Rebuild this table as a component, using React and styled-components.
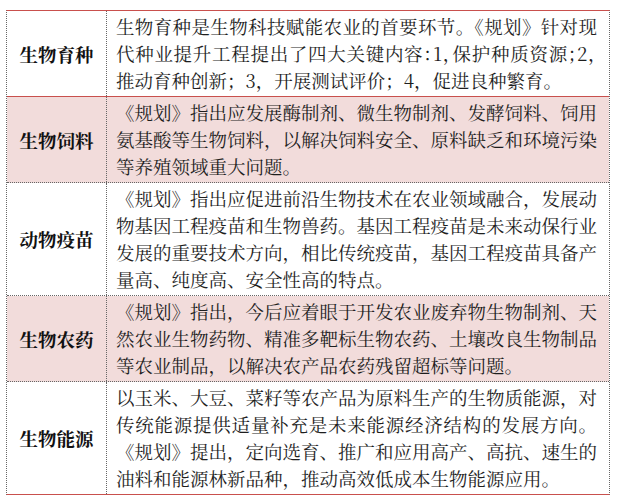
import React from "react";
import styled, { createGlobalStyle } from "styled-components";

const Global = createGlobalStyle`
  html, body { margin: 0; padding: 0; background: #ffffff; }
  body {
    padding: 10px 0 0 6px;
    font-family: "Noto Serif CJK SC", "Noto Sans CJK SC", "Liberation Serif", serif;
  }
`;

const Table = styled.div`
  width: 604px;
  box-sizing: border-box;
  border-top: 1px solid #c9504d;
  border-bottom: 1px solid #c9504d;
  border-left: 1px dotted #666;
  border-right: 1px dotted #666;
`;

const Row = styled.div`
  display: grid;
  grid-template-columns: 100px 1fr;
  background: ${(p) => (p.$alt ? "#f2dcdb" : "#ffffff")};
  border-bottom: ${(p) => (p.$last ? "none" : `1px ${p.$red ? "solid #c9504d" : "dotted #666"}`)};
`;

const Label = styled.div`
  display: flex;
  align-items: center;
  justify-content: center;
  font-weight: 700;
  font-size: 18.5px;
  color: #111;
  border-right: 1px dotted #666;
`;

const Content = styled.div`
  padding: 2px 12px 2px 9px;
  font-size: 18.5px;
  line-height: 27px;
  color: #1e1e1e;
  min-width: 0;
`;

const Line = styled.div`
  white-space: nowrap;
  text-align: ${(p) => (p.$fill ? "justify" : "left")};
  text-align-last: ${(p) => (p.$fill ? "justify" : "left")};
  text-justify: inter-character;
  ${(p) => (p.$compact ? `font-feature-settings: "halt"; letter-spacing: -0.2px;` : "")}
`;

const rows = [
  {
    label: "生物育种",
    lines: [
      "生物育种是生物科技赋能农业的首要环节。《规划》针对现",
      "代种业提升工程提出了四大关键内容：1，保护种质资源；2，",
      "推动育种创新；3，开展测试评价；4，促进良种繁育。",
    ],
    compact: [1],
    red: true,
  },
  {
    label: "生物饲料",
    alt: true,
    lines: [
      "《规划》指出应发展酶制剂、微生物制剂、发酵饲料、饲用",
      "氨基酸等生物饲料，以解决饲料安全、原料缺乏和环境污染",
      "等养殖领域重大问题。",
    ],
  },
  {
    label: "动物疫苗",
    lines: [
      "《规划》指出应促进前沿生物技术在农业领域融合，发展动",
      "物基因工程疫苗和生物兽药。基因工程疫苗是未来动保行业",
      "发展的重要技术方向，相比传统疫苗，基因工程疫苗具备产",
      "量高、纯度高、安全性高的特点。",
    ],
  },
  {
    label: "生物农药",
    alt: true,
    lines: [
      "《规划》指出，今后应着眼于开发农业废弃物生物制剂、天",
      "然农业生物药物、精准多靶标生物农药、土壤改良生物制品",
      "等农业制品，以解决农产品农药残留超标等问题。",
    ],
  },
  {
    label: "生物能源",
    lines: [
      "以玉米、大豆、菜籽等农产品为原料生产的生物质能源，对",
      "传统能源提供适量补充是未来能源经济结构的发展方向。",
      "《规划》提出，定向选育、推广和应用高产、高抗、速生的",
      "油料和能源林新品种，推动高效低成本生物能源应用。",
    ],
  },
];

export default function App() {
  return (
    <>
      <Global />
      <Table lang="zh-CN">
        {rows.map((r, i) => (
          <Row key={r.label} $alt={r.alt} $red={r.red} $last={i === rows.length - 1}>
            <Label>{r.label}</Label>
            <Content>
              {r.lines.map((l, j) => (
                <Line
                  key={j}
                  $fill={j < r.lines.length - 1}
                  $compact={(r.compact || []).includes(j)}
                >
                  {l}
                </Line>
              ))}
            </Content>
          </Row>
        ))}
      </Table>
    </>
  );
}
